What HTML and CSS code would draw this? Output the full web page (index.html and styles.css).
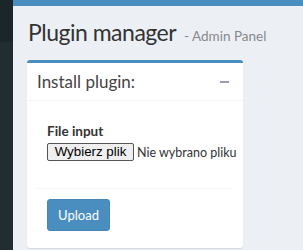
FILE: index.html
```html
<!DOCTYPE html>
<html lang="pl">
<head>
    <meta charset="UTF-8">
    <title>Plugin manager</title>
    <link rel="stylesheet" href="styles.css">
</head>
<body>
    <div class="wrapper">
        <aside class="sidebar">
            <div class="sidebar-logo"></div>
            <div class="sidebar-menu"></div>
        </aside>

        <div class="main">
            <div class="navbar"></div>

            <section class="content-header">
                <h1>Plugin manager <small>- Admin Panel</small></h1>
            </section>

            <section class="content">
                <div class="box box-primary">
                    <div class="box-header">
                        <h3 class="box-title">Install plugin:</h3>
                        <span class="box-tool"></span>
                    </div>
                    <div class="box-body">
                        <form>
                            <div class="form-body">
                                <label class="form-label">File input</label>
                                <div class="file-input">
                                    <button type="button" class="file-btn">Wybierz plik</button>
                                    <span class="file-name">Nie wybrano pliku</span>
                                </div>
                            </div>
                            <div class="form-footer">
                                <button type="button" class="btn-primary">Upload</button>
                            </div>
                        </form>
                    </div>
                </div>
            </section>
        </div>
    </div>
</body>
</html>
```

FILE: styles.css
```css
html,
body {
    margin: 0;
    height: 100%;
    overflow: hidden;
}

body {
    font-family: Lato, "Liberation Sans", sans-serif;
    font-size: 14px;
    color: #333;
    background-color: #ecf0f5;
}

.wrapper {
    display: flex;
    height: 100%;
}

.sidebar {
    width: 13px;
    display: flex;
    flex-direction: column;
    flex-shrink: 0;
}

.sidebar-logo {
    height: 42px;
    background-color: #1c2529;
}

.sidebar-menu {
    flex: 1;
    background-color: #222d32;
}

.main {
    flex: 1;
}

.navbar {
    height: 6px;
    background-color: #4a8ec0;
}

.content-header {
    padding: 11px 15px 0;
}

.content-header h1 {
    margin: 0;
    font-size: 23px;
    font-weight: 400;
    letter-spacing: -0.5px;
    line-height: 30px;
    color: #333;
}

.content-header small {
    font-size: 13.5px;
    letter-spacing: 0;
    color: #888;
    padding-left: 3px;
}

.content {
    padding: 9px 60px 0 14px;
}

.box {
    background: #fff;
    border-top: 3px solid #4a8ec0;
    border-radius: 3px;
    box-shadow: 0 1px 1px rgba(0, 0, 0, 0.1);
    width: 216px;
}

.box-header {
    display: flex;
    align-items: center;
    justify-content: space-between;
    height: 37px;
    padding: 0 14px 0 10px;
    border-bottom: 1px solid #f4f4f4;
}

.box-title {
    margin: 0;
    font-size: 17px;
    font-weight: 400;
    color: #444;
}

.box-tool {
    width: 9px;
    height: 2px;
    background-color: #97a0b3;
}

.box-body {
    padding: 10px 10px 7px;
}

.form-body {
    padding: 12px 10px 27px;
}

.form-label {
    display: block;
    font-weight: 700;
    font-size: 13.5px;
    line-height: 17px;
    margin-bottom: 3px;
}

.file-input {
    display: flex;
    align-items: center;
    gap: 3px;
    height: 18px;
}

.file-btn {
    font-family: "Liberation Sans", Arial, sans-serif;
    font-size: 13.33px;
    color: #000;
    background-color: #efefef;
    border: 1px solid #555;
    border-radius: 2px;
    height: 18px;
    width: 87px;
    padding: 0;
    line-height: 14px;
    flex-shrink: 0;
}

.file-name {
    font-size: 12.5px;
    color: #333;
    white-space: nowrap;
}

.form-footer {
    border-top: 1px solid #f4f4f4;
    padding: 10px;
}

.btn-primary {
    display: block;
    font-family: Lato, "Liberation Sans", sans-serif;
    font-size: 13px;
    color: #fff;
    background-color: #4a8ec0;
    border: 1px solid #4586b6;
    border-radius: 3px;
    width: 63px;
    height: 32px;
    padding: 0;
}
```
